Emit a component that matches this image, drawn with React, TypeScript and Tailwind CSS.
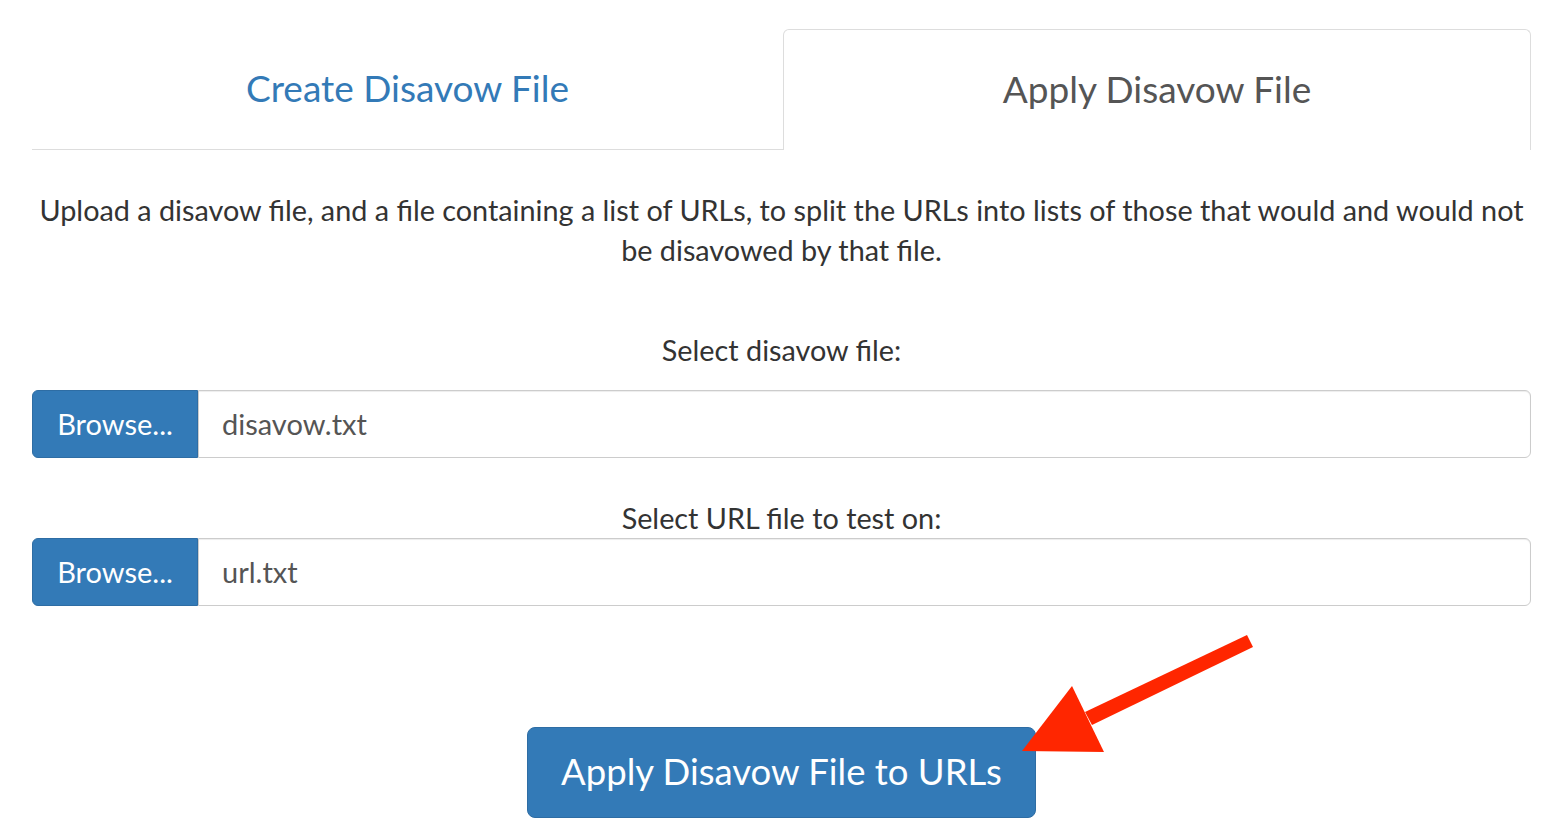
import React from "react";

export default function App() {
  return (
    <div
      className="relative w-[1558px] h-[830px] bg-white overflow-hidden"
      style={{ fontFamily: "Lato, 'Open Sans', sans-serif" }}
    >
      <div className="ml-[32px] w-[1499px]">
        <div className="flex pt-[29px]">
          <div className="w-[751px] h-[121px] border-b border-[#ddd] flex items-center justify-center text-[37px] text-[#337ab7] pb-[2px]">
            Create Disavow File
          </div>
          <div className="flex-1 h-[121px] border border-b-0 border-[#ddd] rounded-t-[6px] flex items-center justify-center text-[37px] text-[#555] pb-[2px]">
            Apply Disavow File
          </div>
        </div>

        <p className="mt-[40px] text-center text-[28.8px] leading-[40px] text-[#333]">
          Upload a disavow file, and a file containing a list of URLs, to split the URLs into lists of those that would and would not be disavowed by that file.
        </p>

        <div className="mt-[60px] text-center text-[28.8px] leading-[40px] text-[#333]">
          Select disavow file:
        </div>
        <div className="mt-[20px] flex h-[68px]">
          <div className="w-[166px] bg-[#337ab7] border border-[#2e6da4] rounded-l-[6px] flex items-center justify-center text-white text-[29px]">
            Browse...
          </div>
          <div className="flex-1 border border-[#ccc] rounded-r-[6px] flex items-center pl-[23px] text-[29px] text-[#555] shadow-[inset_0_1px_1px_rgba(0,0,0,0.075)]">
            disavow.txt
          </div>
        </div>

        <div className="mt-[40px] text-center text-[28.8px] leading-[40px] text-[#333]">
          Select URL file to test on:
        </div>
        <div className="flex h-[68px]">
          <div className="w-[166px] bg-[#337ab7] border border-[#2e6da4] rounded-l-[6px] flex items-center justify-center text-white text-[29px]">
            Browse...
          </div>
          <div className="flex-1 border border-[#ccc] rounded-r-[6px] flex items-center pl-[23px] text-[29px] text-[#555] shadow-[inset_0_1px_1px_rgba(0,0,0,0.075)]">
            url.txt
          </div>
        </div>

        <div className="mt-[121px] flex justify-center">
          <button className="w-[509px] h-[91px] bg-[#337ab7] border border-[#2e6da4] rounded-[8px] text-white text-[36.5px] pb-[2px]">
            Apply Disavow File to URLs
          </button>
        </div>
      </div>

      <svg
        className="absolute left-0 top-0 pointer-events-none"
        width="1558"
        height="830"
        viewBox="0 0 1558 830"
      >
        <polygon points="1247,635 1253,647 1092,725 1085,712" fill="#ff2600" />
        <polygon points="1072,686 1022,751 1104,752" fill="#ff2600" />
      </svg>
    </div>
  );
}
